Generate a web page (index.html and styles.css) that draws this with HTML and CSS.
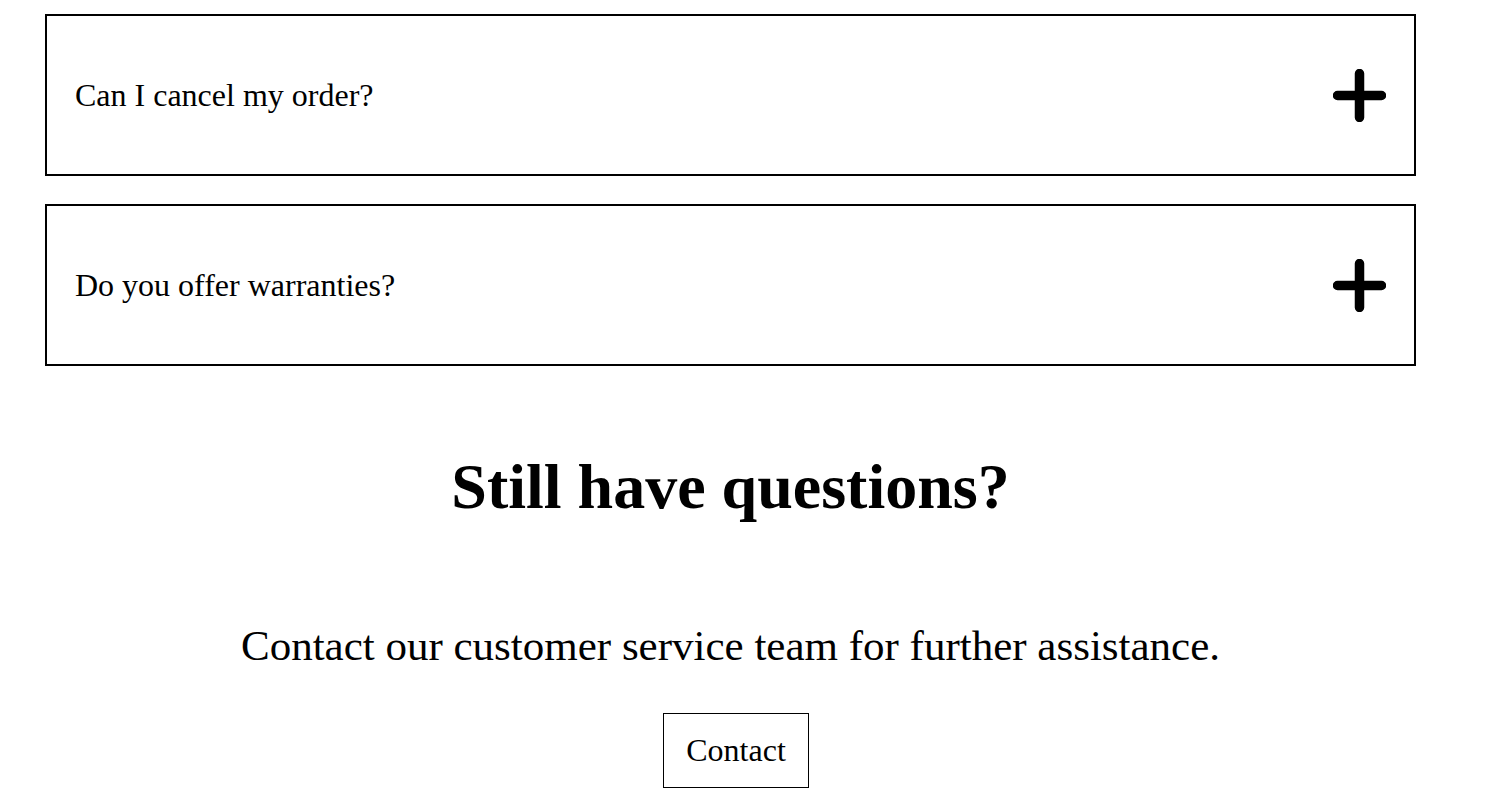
FILE: index.html
```html
<!DOCTYPE html>
<html lang="en">
<head>
<meta charset="utf-8">
<title>FAQ</title>
<link rel="stylesheet" href="styles.css">
</head>
<body>
<main class="page">
  <section class="faq-list">
    <div class="faq-item">
      <span class="faq-question">Can I cancel my order?</span>
      <svg class="faq-icon" width="53" height="53" viewBox="0 0 53 53" aria-hidden="true">
        <path d="M4.5 26.5H48.5M26.5 4.5V48.5" stroke="#000" stroke-width="9.5" stroke-linecap="round" fill="none"/>
      </svg>
    </div>
    <div class="faq-item">
      <span class="faq-question">Do you offer warranties?</span>
      <svg class="faq-icon" width="53" height="53" viewBox="0 0 53 53" aria-hidden="true">
        <path d="M4.5 26.5H48.5M26.5 4.5V48.5" stroke="#000" stroke-width="9.5" stroke-linecap="round" fill="none"/>
      </svg>
    </div>
  </section>
  <section class="cta">
    <h2 class="cta-title">Still have questions?</h2>
    <p class="cta-text">Contact our customer service team for further assistance.</p>
    <div class="cta-action">
      <button class="cta-button" type="button">Contact</button>
    </div>
  </section>
</main>
</body>
</html>
```
FILE: styles.css
```css
html, body {
  margin: 0;
  padding: 0;
  background: #fff;
  color: #000;
  font-family: "Liberation Serif", "Times New Roman", serif;
}

.page {
  width: 1371px;
  margin-left: 45px;
  padding-top: 14px;
}

.faq-list {
  display: flex;
  flex-direction: column;
  gap: 28px;
}

.faq-item {
  box-sizing: border-box;
  height: 162px;
  border: 2px solid #000;
  padding: 0 28px;
  display: flex;
  align-items: center;
  justify-content: space-between;
}

.faq-question {
  font-size: 32px;
}

.faq-icon {
  display: block;
  flex: none;
}

.cta {
  text-align: center;
}

.cta-title {
  margin: 84px 0 0;
  font-size: 64px;
  font-weight: bold;
  line-height: normal;
}

.cta-text {
  margin: 97px 0 0;
  font-size: 43px;
  line-height: normal;
}

.cta-action {
  margin-top: 43px;
  padding-left: 11px;
}

.cta-button {
  font-family: "Liberation Serif", "Times New Roman", serif;
  font-size: 32px;
  line-height: normal;
  background: #fff;
  color: #000;
  border: 1px solid #000;
  padding: 18px 22px;
  cursor: pointer;
}
```
